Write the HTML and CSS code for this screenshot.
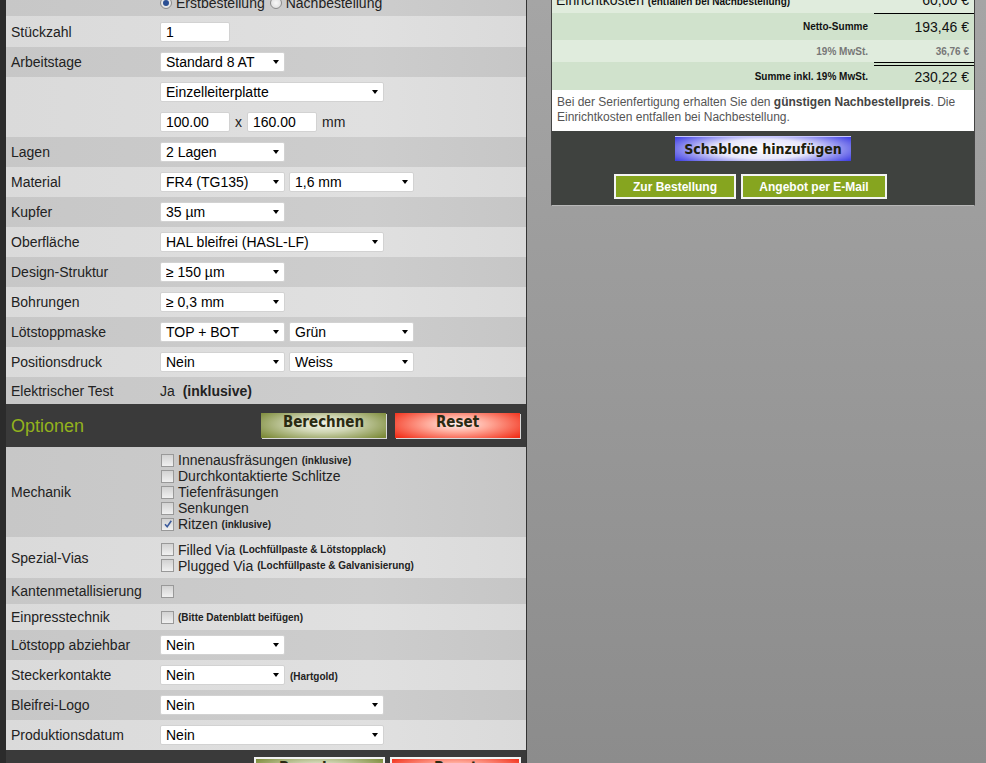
FILE: index.html
```html
<!DOCTYPE html>
<html lang="de">
<head>
  <meta charset="UTF-8">
  <title>Leiterplatten Kalkulator</title>
  <link rel="stylesheet" href="styles.css">
</head>
<body>
<div class="page">
  <!--Konfigurator-->
  <div class="konfig">
    <div class="section">
      <div class="row r-radio">
        <span class="lbl"></span>
        <div class="ctl">
          <label class="opt"><span class="radio on"></span>Erstbestellung</label>
          <label class="opt"><span class="radio"></span>Nachbestellung</label>
        </div>
      </div>
      <div class="row r-31">
        <span class="lbl">Stückzahl</span>
        <div class="ctl"><input class="txt" type="text" value="1"></div>
      </div>
      <div class="row">
        <span class="lbl">Arbeitstage</span>
        <div class="ctl"><span class="sel"><select><option>Standard 8 AT</option></select></span></div>
      </div>
      <div class="row r-60">
        <span class="lbl"></span>
        <div class="ctl ctl-stack">
          <div class="line"><span class="sel wide"><select><option>Einzelleiterplatte</option></select></span></div>
          <div class="line">
            <input class="txt" type="text" value="100.00">
            <span>x</span>
            <input class="txt" type="text" value="160.00">
            <span>mm</span>
          </div>
        </div>
      </div>
      <div class="row">
        <span class="lbl">Lagen</span>
        <div class="ctl"><span class="sel"><select><option>2 Lagen</option></select></span></div>
      </div>
      <div class="row">
        <span class="lbl">Material</span>
        <div class="ctl">
          <span class="sel"><select><option>FR4 (TG135)</option></select></span>
          <span class="sel"><select><option>1,6 mm</option></select></span>
        </div>
      </div>
      <div class="row">
        <span class="lbl">Kupfer</span>
        <div class="ctl"><span class="sel"><select><option>35 µm</option></select></span></div>
      </div>
      <div class="row">
        <span class="lbl">Oberfläche</span>
        <div class="ctl"><span class="sel wide"><select><option>HAL bleifrei (HASL-LF)</option></select></span></div>
      </div>
      <div class="row">
        <span class="lbl">Design-Struktur</span>
        <div class="ctl"><span class="sel"><select><option>≥ 150 µm</option></select></span></div>
      </div>
      <div class="row">
        <span class="lbl">Bohrungen</span>
        <div class="ctl"><span class="sel"><select><option>≥ 0,3 mm</option></select></span></div>
      </div>
      <div class="row">
        <span class="lbl">Lötstoppmaske</span>
        <div class="ctl">
          <span class="sel"><select><option>TOP + BOT</option></select></span>
          <span class="sel"><select><option>Grün</option></select></span>
        </div>
      </div>
      <div class="row">
        <span class="lbl">Positionsdruck</span>
        <div class="ctl">
          <span class="sel"><select><option>Nein</option></select></span>
          <span class="sel"><select><option>Weiss</option></select></span>
        </div>
      </div>
      <div class="row r-27">
        <span class="lbl">Elektrischer Test</span>
        <div class="ctl">Ja&nbsp;<b>(inklusive)</b></div>
      </div>
    </div>

    <!--Optionen-->
    <div class="bar">
      <h2>Optionen</h2>
      <div class="btns">
        <a href="javascript:;" class="btn calc">Berechnen</a>
        <a href="javascript:;" class="btn reset">Reset</a>
      </div>
    </div>

    <div class="section">
      <div class="row r-90">
        <span class="lbl">Mechanik</span>
        <div class="ctl ctl-checks">
          <label class="chk"><span class="box"></span>Innenausfräsungen&nbsp;<small>(inklusive)</small></label>
          <label class="chk"><span class="box"></span>Durchkontaktierte Schlitze</label>
          <label class="chk"><span class="box"></span>Tiefenfräsungen</label>
          <label class="chk"><span class="box"></span>Senkungen</label>
          <label class="chk"><span class="box"><svg width="10" height="10" viewBox="0 0 10 10"><path d="M2 5.2 L4.2 7.8 L8.3 1.8" fill="none" stroke="#3b5b9c" stroke-width="1.6"/></svg></span>Ritzen&nbsp;<small>(inklusive)</small></label>
        </div>
      </div>
      <div class="row r-41">
        <span class="lbl">Spezial-Vias</span>
        <div class="ctl ctl-checks">
          <label class="chk"><span class="box"></span>Filled Via&nbsp;<small>(Lochfüllpaste &amp; Lötstopplack)</small></label>
          <label class="chk"><span class="box"></span>Plugged Via&nbsp;<small>(Lochfüllpaste &amp; Galvanisierung)</small></label>
        </div>
      </div>
      <div class="row r-26">
        <span class="lbl">Kantenmetallisierung</span>
        <div class="ctl"><label class="chk"><span class="box"></span></label></div>
      </div>
      <div class="row r-26">
        <span class="lbl">Einpresstechnik</span>
        <div class="ctl"><label class="chk"><span class="box"></span><small>(Bitte Datenblatt beifügen)</small></label></div>
      </div>
      <div class="row">
        <span class="lbl">Lötstopp abziehbar</span>
        <div class="ctl"><span class="sel"><select><option>Nein</option></select></span></div>
      </div>
      <div class="row">
        <span class="lbl">Steckerkontakte</span>
        <div class="ctl"><span class="sel"><select><option>Nein</option></select></span><small>(Hartgold)</small></div>
      </div>
      <div class="row">
        <span class="lbl">Bleifrei-Logo</span>
        <div class="ctl"><span class="sel wide"><select><option>Nein</option></select></span></div>
      </div>
      <div class="row">
        <span class="lbl">Produktionsdatum</span>
        <div class="ctl"><span class="sel wide"><select><option>Nein</option></select></span></div>
      </div>
    </div>

    <div class="bar bar-bottom">
      <div class="btns">
        <a href="javascript:;" class="btn calc framed">Berechnen</a>
        <a href="javascript:;" class="btn reset framed">Reset</a>
      </div>
    </div>
  </div>

  <!--Preisübersicht-->
  <div class="summary">
    <div class="srow hell r-first">
      <div class="s-lbl s-left">Einrichtkosten <small>(entfallen bei Nachbestellung)</small></div>
      <div class="s-val">60,00 €</div>
    </div>
    <div class="srow gruen r-netto">
      <div class="s-lbl">Netto-Summe</div>
      <div class="s-val top-line">193,46 €</div>
    </div>
    <div class="srow hell r-mwst">
      <div class="s-lbl grau">19% MwSt.</div>
      <div class="s-val grau klein">36,76 €</div>
    </div>
    <div class="srow gruen r-summe">
      <div class="s-lbl">Summe inkl. 19% MwSt.</div>
      <div class="s-val double-line">230,22 €</div>
    </div>
    <p class="hinweis">Bei der Serienfertigung erhalten Sie den <b>günstigen Nachbestellpreis</b>. Die Einrichtkosten entfallen bei Nachbestellung.</p>
    <div class="actions">
      <a href="javascript:;" class="btn schablone">Schablone hinzufügen</a>
      <div class="order">
        <a href="javascript:;" class="gbtn">Zur Bestellung</a>
        <a href="javascript:;" class="gbtn">Angebot per E-Mail</a>
      </div>
    </div>
  </div>
</div>
</body>
</html>
```

FILE: styles.css
```css
* {
  margin: 0;
  padding: 0;
  box-sizing: border-box;
}

body {
  font: 14px "Liberation Sans", Arial, sans-serif;
  color: #222;
  background: linear-gradient(to bottom, #a5a5a5 0%, #969696 60%, #8c8c8c 100%);
  height: 763px;
  overflow: hidden;
}

.page {
  display: flex;
  align-items: flex-start;
}

/*Konfigurator*/
.konfig {
  width: 527px;
  margin-top: -10px;
  border-left: 6px solid #2b2b2b;
  border-right: 1px solid #333;
}

.row {
  display: flex;
  align-items: center;
  height: 30px;
  background: linear-gradient(to right, #dadada, #e0e0e0 70%, #dadada);
}

.section .row:nth-child(odd) {
  background: linear-gradient(to right, #c7c7c7, #cdcdcd 70%, #c6c6c6);
}

.r-radio { height: 26px; }
.r-31 { height: 31px; }
.r-60 { height: 60px; }
.r-27 { height: 27px; }
.r-90 { height: 90px; }
.r-41 { height: 41px; }
.r-26 { height: 26px; }

.lbl {
  width: 154px;
  padding-left: 5px;
  flex-shrink: 0;
}

.ctl {
  display: flex;
  align-items: center;
  gap: 4px;
}

.ctl-stack {
  flex-direction: column;
  align-items: flex-start;
  gap: 0;
}

.ctl-stack .line {
  height: 30px;
  display: flex;
  align-items: center;
  gap: 5px;
}

.ctl-checks {
  flex-direction: column;
  align-items: flex-start;
  gap: 0;
}

small {
  font-size: 10px;
  font-weight: bold;
}

.ctl > small {
  margin-left: 1px;
  margin-top: 2px;
}

/*Eingabefelder*/
.txt {
  width: 70px;
  height: 20px;
  border: 1px solid #d2d2d2;
  border-radius: 2px;
  background: #fff;
  font: 14px "Liberation Sans", Arial, sans-serif;
  padding: 0 5px;
  color: #000;
}

.sel {
  position: relative;
  display: inline-block;
  height: 20px;
}

.sel select {
  -webkit-appearance: none;
  appearance: none;
  width: 125px;
  height: 20px;
  border: 1px solid #d2d2d2;
  border-radius: 2px;
  background: #fff;
  font: 14px "Liberation Sans", Arial, sans-serif;
  color: #000;
  padding: 0 0 0 5px;
  outline: none;
}

.sel.wide select {
  width: 224px;
}

.sel::after {
  content: "";
  position: absolute;
  right: 6px;
  top: 8px;
  border-left: 3.5px solid transparent;
  border-right: 3.5px solid transparent;
  border-top: 4px solid #000;
  pointer-events: none;
}

/*Radio + Checkbox*/
.opt {
  display: flex;
  align-items: center;
  margin-right: 1px;
}

.radio {
  width: 12px;
  height: 12px;
  border-radius: 50%;
  border: 1px solid #8c8c8c;
  background: radial-gradient(circle, #f8f8f8, #d8d8d8);
  margin-right: 4px;
  position: relative;
}

.radio.on::after {
  content: "";
  position: absolute;
  left: 2px;
  top: 2px;
  width: 6px;
  height: 6px;
  border-radius: 50%;
  background: #2b4f93;
}

.chk {
  display: flex;
  align-items: center;
  height: 16px;
}

.box {
  width: 13px;
  height: 13px;
  border: 1px solid #999;
  background: linear-gradient(#d2d2d2, #f0f0f0);
  margin: 0 4px 0 1px;
  display: flex;
  align-items: center;
  justify-content: center;
}

/*Balken*/
.bar {
  height: 43px;
  background: #3a3a3a;
  display: flex;
  align-items: center;
  justify-content: space-between;
  padding: 0 6px 0 5px;
}

.bar h2 {
  font: normal 18px "Liberation Sans", Arial, sans-serif;
  color: #93b21d;
  margin-top: 1px;
}

.btns {
  display: flex;
  gap: 9px;
}

.btn {
  display: block;
  width: 125px;
  height: 25px;
  line-height: 26px;
  text-align: center;
  text-decoration: none;
  font: bold 15px "DejaVu Sans Condensed", "DejaVu Sans", sans-serif;
  color: #2a2a12;
  box-shadow: 1px 1px 0 #d8d8d8;
}

.calc {
  background: radial-gradient(ellipse 62% 80% at 50% 45%, #f2f4ea 0%, #cfd5b3 40%, #7c8a38 100%);
}

.reset {
  background: radial-gradient(ellipse 62% 80% at 50% 45%, #fff2f0 0%, #ffaa9a 40%, #f2301a 100%);
}

.bar-bottom {
  height: 40px;
  align-items: flex-start;
  justify-content: flex-end;
  padding: 7px 5px 0 0;
}

.bar-bottom .btns {
  gap: 5px;
}

.btn.framed {
  width: 131px;
  height: 30px;
  border: 2px solid #f2f2f2;
  box-shadow: none;
}

/*Preisübersicht*/
.summary {
  width: 424px;
  margin: -13px 0 0 24px;
  border-left: 1px solid #444;
  border-right: 1px solid #444;
  border-bottom: 1px solid #b8b8b8;
  background: #fff;
}

.srow {
  display: flex;
  align-items: center;
  font-weight: bold;
  font-size: 10px;
  color: #111;
}

.srow.hell { background: #e0ecdd; }
.srow.gruen { background: #d0e2cc; }

.r-first { height: 26px; }
.r-netto { height: 27px; }
.r-mwst { height: 22px; }
.r-summe { height: 28px; }

.s-lbl {
  flex: 1;
  text-align: right;
  padding-right: 6px;
  align-self: center;
}

.s-left {
  text-align: left;
  padding-left: 4px;
  font-weight: normal;
  font-size: 14px;
}

.s-val {
  width: 100px;
  height: 100%;
  display: flex;
  align-items: center;
  justify-content: flex-end;
  padding-right: 5px;
  font-weight: normal;
  font-size: 14px;
}

.grau { color: #777; }

.s-val.klein {
  font-size: 10px;
  font-weight: bold;
}

.top-line {
  border-top: 1px solid #000;
}

.double-line {
  border-top: 4px double #000;
  padding-bottom: 3px;
}

.hinweis {
  font-size: 12px;
  line-height: 15px;
  color: #555;
  padding: 5px 5px 6px 5px;
  height: 41px;
}

.hinweis b {
  color: #444;
}

.actions {
  background: #3f423f;
  height: 74px;
  padding-top: 5px;
  display: flex;
  flex-direction: column;
  align-items: center;
}

.btn.schablone {
  width: 176px;
  height: 25px;
  line-height: 24px;
  color: #1e1e0c;
  font-size: 14px;
  background: radial-gradient(ellipse 62% 90% at 50% 50%, #ffffff 0%, #e6e6fb 45%, #3434e2 100%);
  box-shadow: none;
  border-top: 1px solid #c8c8ff;
}

.order {
  display: flex;
  gap: 5px;
  margin-top: 13px;
  margin-right: 25px;
}

.gbtn {
  display: flex;
  align-items: center;
  justify-content: center;
  height: 25px;
  padding-top: 1px;
  border: 2px solid #f4f4f4;
  background: #86a51f;
  color: #fff;
  font: bold 12px "Liberation Sans", Arial, sans-serif;
  text-decoration: none;
}

.gbtn:first-child { width: 122px; }
.gbtn:last-child { width: 146px; }
```
